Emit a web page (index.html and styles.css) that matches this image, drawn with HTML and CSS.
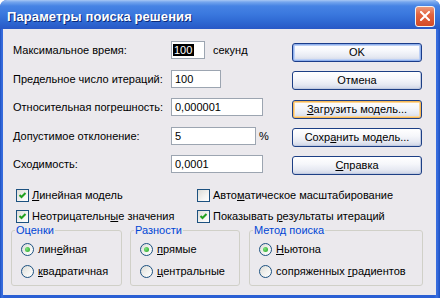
FILE: index.html
```html
<!DOCTYPE html>
<html lang="ru">
<head>
<meta charset="utf-8">
<title>Параметры поиска решения</title>
<link rel="stylesheet" href="styles.css">
</head>
<body>
<div class="window">
  <div class="titlebar">
    <span class="title">Параметры поиска решения</span>
    <span class="close"><svg width="10" height="10" viewBox="0 0 10 10"><path d="M1 1 L9 9 M9 1 L1 9" stroke="#fff" stroke-width="2" stroke-linecap="square"/></svg></span>
  </div>
  <div class="client">
    <div class="top">
      <div class="fields">
        <span class="lbl">Максимальное время:</span>
        <span class="cell"><span class="edit w-time"><span class="sel">100</span></span><span class="unit">секунд</span></span>
        <span class="lbl">Предельное число итераций:</span>
        <span class="cell"><span class="edit w-iter">100</span></span>
        <span class="lbl">Относительная погрешность:</span>
        <span class="cell"><span class="edit w-wide">0,000001</span></span>
        <span class="lbl">Допустимое отклонение:</span>
        <span class="cell"><span class="edit w-dev">5</span><span class="pct">%</span></span>
        <span class="lbl">Сходимость:</span>
        <span class="cell"><span class="edit w-wide">0,0001</span></span>
      </div>
      <div class="buttons">
        <span class="btn default">OK</span>
        <span class="btn">Отмена</span>
        <span class="btn hot"><u>З</u>агрузить модель...</span>
        <span class="btn">Сохр<u>а</u>нить модель...</span>
        <span class="btn"><u>С</u>правка</span>
      </div>
    </div>
    <div class="checks">
      <span class="chk"><span class="cb"><svg width="11" height="11" viewBox="0 0 11 11"><path d="M2.5 5 L4.5 7 L8.5 3" stroke="#21a121" stroke-width="2" fill="none"/></svg></span><span><u>Л</u>инейная модель</span></span>
      <span class="chk"><span class="cb"></span><span>Авто<u>м</u>атическое масштабирование</span></span>
      <span class="chk"><span class="cb"><svg width="11" height="11" viewBox="0 0 11 11"><path d="M2.5 5 L4.5 7 L8.5 3" stroke="#21a121" stroke-width="2" fill="none"/></svg></span><span>Неотрицательн<u>ы</u>е значения</span></span>
      <span class="chk"><span class="cb"><svg width="11" height="11" viewBox="0 0 11 11"><path d="M2.5 5 L4.5 7 L8.5 3" stroke="#21a121" stroke-width="2" fill="none"/></svg></span><span>Показывать <u>р</u>езультаты итераций</span></span>
    </div>
    <div class="groups">
      <fieldset class="grp g1">
        <legend>Оценки</legend>
        <span class="opt"><span class="rd on"></span><span>лин<u>е</u>йная</span></span>
        <span class="opt"><span class="rd"></span><span><u>к</u>вадратичная</span></span>
      </fieldset>
      <fieldset class="grp g2">
        <legend>Разности</legend>
        <span class="opt"><span class="rd on"></span><span><u>п</u>рямые</span></span>
        <span class="opt"><span class="rd"></span><span><u>ц</u>ентральные</span></span>
      </fieldset>
      <fieldset class="grp g3">
        <legend>Метод поиска</legend>
        <span class="opt"><span class="rd on"></span><span><u>Н</u>ьютона</span></span>
        <span class="opt"><span class="rd"></span><span>сопряженных <u>г</u>радиентов</span></span>
      </fieldset>
    </div>
  </div>
</div>
</body>
</html>
```
FILE: styles.css
```css
* { box-sizing: border-box; }
body {
  margin: 0;
  background: #fff;
  font-family: "Liberation Sans", Arial, sans-serif;
  font-size: 11px;
  color: #000;
}
.window {
  width: 440px;
  height: 298px;
  background: linear-gradient(to right, #1c4fc0 0, #3a6fe0 2px, #2a5fd4 4px, #2a5fd4 434px, #3a6fe0 437px, #1c4fc0 440px);
  border-radius: 7px 7px 0 0;
  display: flex;
  flex-direction: column;
  overflow: hidden;
}
.titlebar {
  height: 29px;
  flex: none;
  display: flex;
  align-items: center;
  justify-content: space-between;
  padding: 3px 5px 0 7px;
  background: linear-gradient(#a9c8f4 0, #75a6ee 2px, #4683e4 6px, #3a78de 14px, #2e68d2 22px, #2858c6 29px);
}
.title {
  color: #fff;
  font-weight: bold;
  font-size: 13px;
  letter-spacing: 0.1px;
  text-shadow: 1px 1px 0 #0b2a7a;
}
.close {
  width: 20px;
  height: 21px;
  border: 1px solid #f3f3f3;
  border-radius: 3px;
  background: linear-gradient(#ee9a7c, #e2643f 40%, #d44a26 100%);
  display: flex;
  align-items: center;
  justify-content: center;
}
.client {
  flex: 1;
  margin: 0 4px 3px 3px;
  background: #ebe9ed;
  padding: 12px 0 0 0;
}
.top {
  display: flex;
  padding-left: 10px;
}
.fields {
  width: 279px;
  flex: none;
  display: grid;
  grid-template-columns: 158px 1fr;
  grid-auto-rows: 18px;
  row-gap: 10.5px;
  align-items: center;
}
.lbl { line-height: 18px; }
.cell {
  display: flex;
  align-items: center;
  height: 18px;
}
.edit {
  height: 18px;
  border: 1px solid #9ca5b1;
  background: #fff;
  padding: 0 3px;
  line-height: 16px;
  display: flex;
  align-items: center;
}
.w-time { width: 34px; padding-left: 1px; }
.w-iter { width: 50px; }
.w-wide { width: 92px; }
.w-dev { width: 85px; }
.sel {
  background: #000;
  color: #fff;
  padding: 0 2px 0 1px;
  line-height: 12px;
}
.unit { margin-left: 8px; }
.pct { margin-left: 3px; }
.buttons {
  width: 130px;
  margin-top: 2px;
  display: flex;
  flex-direction: column;
  gap: 9.25px;
}
.btn {
  height: 19px;
  border: 1px solid #1d3f85;
  border-radius: 3px;
  background: linear-gradient(#ffffff 0, #f6f7fb 40%, #e6e9f2 75%, #cdd4e6 100%);
  box-shadow: inset -1px -1px 0 #c2cbe0;
  display: flex;
  align-items: center;
  justify-content: center;
  line-height: 13px;
}
.btn.default {
  box-shadow: inset 0 0 0 1px #8fb0ec, inset 0 0 0 2px #bccff5;
  border-color: #1a3c8a;
}
.btn.hot {
  box-shadow: inset 0 0 0 1px #f6b856, inset 0 0 0 2px #fcd79b;
}
.checks {
  margin-top: 14px;
  padding-left: 13px;
  display: grid;
  grid-template-columns: 181px 1fr;
  grid-auto-rows: 13px;
  row-gap: 8px;
}
.chk {
  display: flex;
  align-items: center;
  gap: 3px;
  line-height: 13px;
}
.cb {
  width: 13px;
  height: 13px;
  flex: none;
  border: 1px solid #1c5180;
  background: linear-gradient(135deg, #dcdcd7 0, #f4f4f2 60%, #fff 100%);
  display: flex;
  align-items: center;
  justify-content: center;
}
.groups {
  margin-top: 1px;
  padding-left: 8px;
  display: flex;
}
.grp {
  margin: 0;
  border: 1px solid #d0d0c8;
  border-radius: 3px;
  padding: 6px 4px 7px 9px;
  display: flex;
  flex-direction: column;
  gap: 9px;
  min-width: 0;
}
.g1 { width: 111px; }
.g2 { width: 110px; margin-left: 8px; }
.g3 { width: 174px; margin-left: 9px; }
.grp legend {
  color: #0046d5;
  padding: 0 1px;
  margin-left: -6px;
  line-height: 13px;
}
.opt {
  display: flex;
  align-items: center;
  gap: 4px;
  height: 13px;
  line-height: 13px;
}
.rd {
  width: 13px;
  height: 13px;
  flex: none;
  border-radius: 50%;
  border: 1px solid #1c5180;
  background: linear-gradient(135deg, #dcdcd7 0, #f2f2ef 55%, #fff 100%);
  display: flex;
  align-items: center;
  justify-content: center;
}
.rd.on::after {
  content: "";
  width: 5px;
  height: 5px;
  border-radius: 50%;
  background: radial-gradient(circle at 35% 35%, #7ce37c, #21a121);
}
u { text-decoration: underline; text-underline-offset: 1px; }
```
